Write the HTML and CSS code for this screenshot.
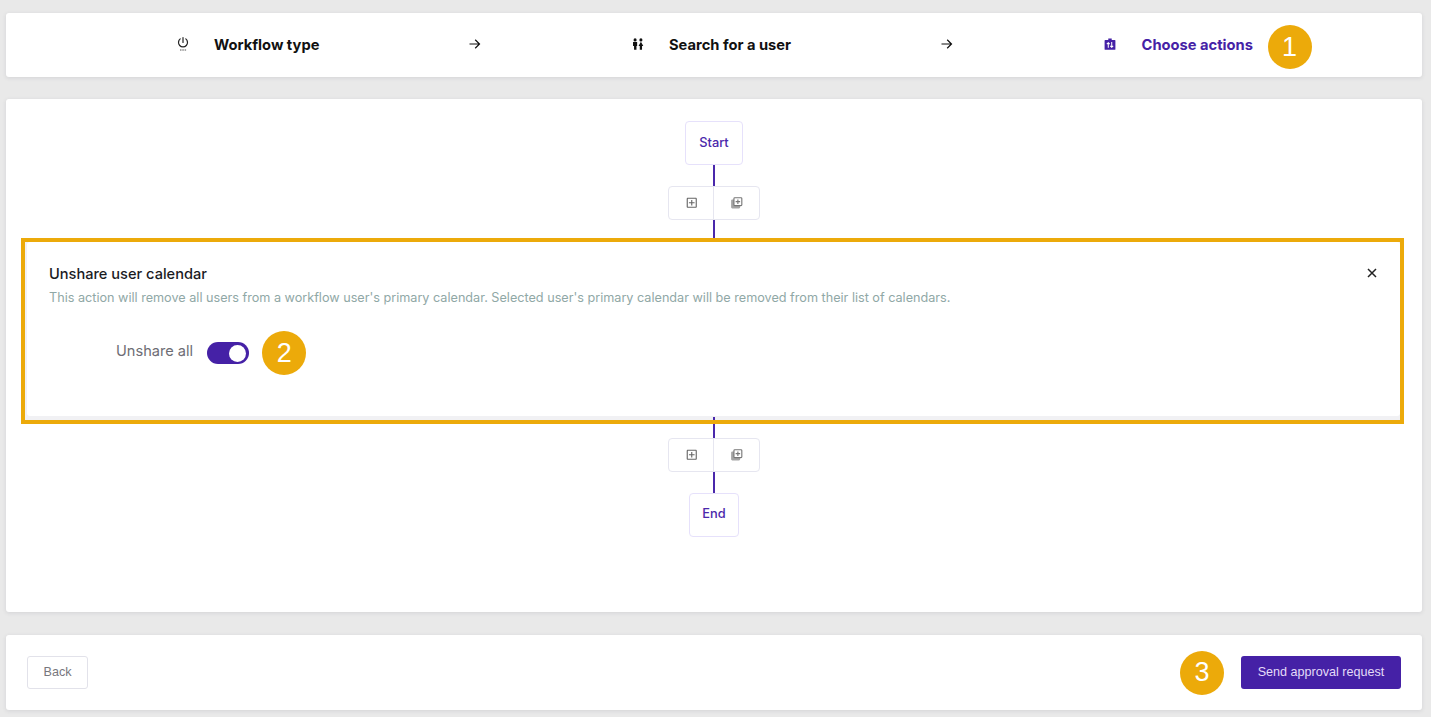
FILE: index.html
```html
<!DOCTYPE html>
<html lang="en">
<head>
<meta charset="utf-8">
<title>Choose actions</title>
<link rel="stylesheet" href="styles.css">
</head>
<body>
<main class="page">
  <nav class="card steps">
    <div class="step">
      <svg class="step-icon step-icon-tall" viewBox="0 0 12 14"><path d="M3.200 1.900a4.500 4.500 0 1 0 5.600 0M6 .6v4.800" fill="none" stroke="#222" stroke-width="1.200" stroke-linecap="round"/><path d="M3 13h1.500M5.300 13h1.500M7.600 13h1.500" stroke="#555" stroke-width="1"/></svg>
      <span class="step-label">Workflow type</span>
    </div>
    <svg class="arrow" viewBox="0 0 13 12"><path d="M.5 6h10M6.200 1.800 10.500 6l-4.300 4.200" fill="none" stroke="#111" stroke-width="1.200"/></svg>
    <div class="step">
      <svg class="step-icon" viewBox="0 0 14 14"><circle cx="3.600" cy="2.200" r="1.800" fill="#111"/><circle cx="10.400" cy="2.200" r="1.800" fill="#111"/><path d="M1.200 4.600h4.800v4.600H5.200v4.400H2.400V9.200H1.200zM10.400 4.400l2.800 5h-1.500v4.200H9.100V9.400H7.600z" fill="#111"/></svg>
      <span class="step-label">Search for a user</span>
    </div>
    <svg class="arrow" viewBox="0 0 13 12"><path d="M.5 6h10M6.200 1.800 10.500 6l-4.300 4.200" fill="none" stroke="#111" stroke-width="1.200"/></svg>
    <div class="step step-active">
      <svg class="step-icon" viewBox="0 0 14 14"><path d="M1.500 2.200h3.500V.6h4v1.600h3.500a.8.8 0 0 1 .8.8v10a.8.8 0 0 1-.8.800h-11a.8.8 0 0 1-.8-.8V3a.8.8 0 0 1 .8-.8z" fill="#4521a6"/><path d="M5 11.500V5.400M3.300 7.100 5 5.400l1.700 1.700M9 4.800v6.100M7.300 9.200 9 10.900l1.700-1.700" fill="none" stroke="#fff" stroke-width="1.200"/></svg>
      <span class="step-label">Choose actions</span>
      <span class="badge badge-one">1</span>
    </div>
  </nav>

  <section class="card canvas">
    <div class="node node-start"><span>Start</span></div>
    <div class="line line-short"></div>
    <div class="toolbar">
      <button class="tool"><svg viewBox="0 0 24 24"><path d="M19 5v14H5V5h14m0-2H5c-1.100 0-2 .9-2 2v14c0 1.100.9 2 2 2h14c1.100 0 2-.9 2-2V5c0-1.100-.9-2-2-2zm-6 4h-2v4H7v2h4v4h2v-4h4v-2h-4z" fill="#666"/></svg></button>
      <button class="tool"><svg viewBox="0 0 24 24"><rect x="2" y="6" width="16" height="16" rx="2" fill="#a4a4a4"/><rect x="7" y="3" width="14" height="14" rx="1.500" fill="#fff" stroke="#777" stroke-width="2"/><path d="M13 14h2v-3h3V9h-3V6h-2v3h-3v2h3z" fill="#777"/></svg></button>
    </div>
    <div class="line line-top"></div>

    <div class="panel-wrap">
      <article class="panel">
        <header class="panel-head">
          <div>
            <h2 class="panel-title">Unshare user calendar</h2>
            <p class="panel-desc">This action will remove all users from a workflow user's primary calendar. Selected user's primary calendar will be removed from their list of calendars.</p>
          </div>
          <svg class="close" viewBox="0 0 10 10"><path d="M1 1l8 8M9 1l-8 8" stroke="#222" stroke-width="1.500" fill="none"/></svg>
        </header>
        <div class="field">
          <span class="field-label">Unshare all</span>
          <span class="switch"><span class="knob"></span></span>
          <span class="badge">2</span>
        </div>
      </article>
      <div class="highlight"></div>
    </div>

    <div class="line line-bottom"></div>
    <div class="toolbar">
      <button class="tool"><svg viewBox="0 0 24 24"><path d="M19 5v14H5V5h14m0-2H5c-1.100 0-2 .9-2 2v14c0 1.100.9 2 2 2h14c1.100 0 2-.9 2-2V5c0-1.100-.9-2-2-2zm-6 4h-2v4H7v2h4v4h2v-4h4v-2h-4z" fill="#666"/></svg></button>
      <button class="tool"><svg viewBox="0 0 24 24"><rect x="2" y="6" width="16" height="16" rx="2" fill="#a4a4a4"/><rect x="7" y="3" width="14" height="14" rx="1.500" fill="#fff" stroke="#777" stroke-width="2"/><path d="M13 14h2v-3h3V9h-3V6h-2v3h-3v2h3z" fill="#777"/></svg></button>
    </div>
    <div class="line line-short"></div>
    <div class="node node-end"><span>End</span></div>
  </section>

  <footer class="card actions">
    <button class="btn btn-back">Back</button>
    <div class="actions-right">
      <span class="badge">3</span>
      <button class="btn btn-primary">Send approval request</button>
    </div>
  </footer>
</main>
</body>
</html>
```
FILE: styles.css
```css
* { box-sizing: border-box; }
html, body { margin: 0; height: 100%; }
body {
  background: #e9e9e9;
  font-family: Inter, "Liberation Sans", sans-serif;
  overflow: hidden;
}
.page {
  display: flex;
  flex-direction: column;
  padding: 13px 9px 0 6px;
}
.card {
  background: #fff;
  border-radius: 3px;
  box-shadow: 0 1px 4px rgba(60, 60, 80, .12);
}
.steps {
  height: 64px;
  display: flex;
  align-items: center;
  justify-content: space-between;
  padding: 0 169px 2px 171px;
  margin-bottom: 22px;
}
.step {
  display: flex;
  align-items: center;
  gap: 25px;
  position: relative;
  color: #111;
  font-size: 14.700px;
  line-height: 18px;
  font-weight: 700;
}
.step-label { padding-top: 2px; }
.step-icon { width: 12px; height: 12px; flex: none; display: block; }
.step-icon-tall { height: 14px; }
.step-active { color: #4521a6; gap: 26px; }
.arrow { width: 13px; height: 12px; flex: none; }
.badge {
  width: 44px;
  height: 44px;
  border-radius: 50%;
  background: #ecaa0a;
  color: #fff;
  font-family: "Liberation Sans", Arial, sans-serif;
  font-size: 27px;
  font-weight: 400;
  display: flex;
  align-items: center;
  justify-content: center;
  flex: none;
}
.badge-one { position: absolute; left: 164px; top: -9px; }
.canvas {
  height: 513px;
  margin-bottom: 23px;
  padding-top: 22px;
  display: flex;
  flex-direction: column;
  align-items: center;
}
.node {
  height: 44px;
  flex: none;
  background: #fff;
  border: 1px solid #e6e1fb;
  border-radius: 4px;
  color: #4a28ab;
  font-size: 12.800px;
  font-weight: 500;
  display: flex;
  align-items: center;
  justify-content: center;
  padding-bottom: 2px;
}
.node-start { width: 58px; }
.node-end { width: 50px; padding-bottom: 3px; }
.line { width: 2px; background: #4a28ab; flex: none; }
.line-short { height: 21px; }
.line-top { height: 22px; }
.line-bottom { height: 21px; margin-top: -3px; position: relative; }
.toolbar {
  display: flex;
  width: 92px;
  height: 34px;
  flex: none;
  border: 1px solid #e6e6f0;
  border-radius: 4px;
  background: #fff;
}
.tool {
  flex: 1;
  padding: 0;
  border: 0;
  background: none;
  display: flex;
  align-items: center;
  justify-content: center;
}
.tool:first-child { flex: 0 0 44px; padding-left: 1px; }
.tool + .tool { border-left: 1px solid #e6e6f0; }
.tool svg { width: 13.500px; height: 13.500px; display: block; }
.panel-wrap {
  position: relative;
  align-self: flex-start;
  width: 1375px;
  margin: 0 0 0 19px;
  height: 178px;
  flex: none;
}
.panel {
  height: 178px;
  background: #f1f1f4;
  padding: 0 0 4px 2px;
  position: relative;
}
.panel-head {
  background: #fff;
  height: 174px;
  padding: 22px 22px 0 22px;
  display: flex;
  justify-content: space-between;
  align-items: flex-start;
  border-radius: 3px;
}
.panel-title {
  margin: 0;
  font-size: 14.600px;
  line-height: 20px;
  font-weight: 500;
  color: #1b1b1f;
}
.panel-desc {
  margin: 5px 0 0;
  font-size: 12.650px;
  line-height: 18px;
  color: #90a8a6;
}
.close { width: 10px; height: 10px; margin: 4px 1px 0 0; flex: none; }
.field {
  position: absolute;
  left: 91px;
  top: 89px;
  display: flex;
  align-items: center;
}
.field-label { font-size: 14.600px; line-height: 18px; color: #6d6d74; margin: 0 14px 4px 0; }
.switch {
  width: 42px;
  height: 22px;
  border-radius: 11px;
  background: #4521a6;
  display: flex;
  align-items: center;
  justify-content: flex-end;
  padding-right: 3px;
  margin-right: 13px;
}
.knob { width: 17px; height: 17px; border-radius: 50%; background: #fff; }
.highlight {
  position: absolute;
  inset: -4px;
  border: 4px solid #ecaa0a;
  pointer-events: none;
  z-index: 2;
}
.actions {
  height: 75px;
  display: flex;
  align-items: center;
  justify-content: space-between;
  padding: 0 21px;
}
.actions-right { display: flex; align-items: center; gap: 17px; }
.btn {
  font-family: "Liberation Sans", Arial, sans-serif;
  font-size: 12.600px;
  border-radius: 3px;
  height: 33px;
  padding: 0 0 2px;
}
.btn-back {
  width: 61px;
  background: #fff;
  border: 1px solid #e2e2ea;
  color: #77777d;
}
.btn-primary {
  width: 160px;
  background: #4521a6;
  border: 0;
  color: #e4dcf8;
}
```
